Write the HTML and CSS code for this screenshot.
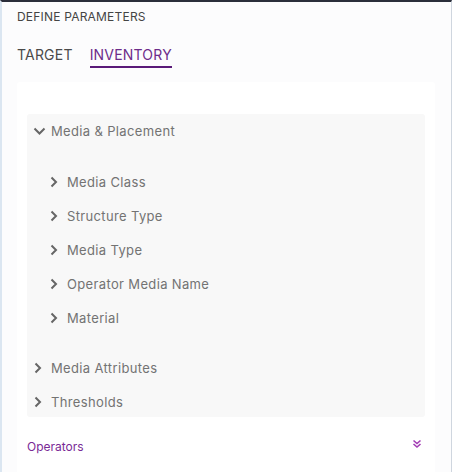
FILE: index.html
```html
<!DOCTYPE html>
<html>
<head>
<meta charset="utf-8">
<link rel="stylesheet" href="styles.css">
</head>
<body>
<div class="panel">
  <div class="title">DEFINE PARAMETERS</div>
  <div class="tabs">
    <div class="tab">TARGET</div>
    <div class="tab active">INVENTORY</div>
  </div>
  <div class="card">
    <div class="tree">
      <div class="row top">
        <svg class="chev" width="13" height="10" viewBox="0 0 13 10"><path d="M1.5 2.5 L6.5 7.5 L11.5 2.5" fill="none" stroke="#666" stroke-width="2"/></svg>
        <span>Media &amp; Placement</span>
      </div>
      <div class="children">
        <div class="row sub"><svg class="chev" width="8" height="12" viewBox="0 0 8 12"><path d="M1.5 1.5 L6 6 L1.5 10.5" fill="none" stroke="#666" stroke-width="2"/></svg><span>Media Class</span></div>
        <div class="row sub"><svg class="chev" width="8" height="12" viewBox="0 0 8 12"><path d="M1.5 1.5 L6 6 L1.5 10.5" fill="none" stroke="#666" stroke-width="2"/></svg><span>Structure Type</span></div>
        <div class="row sub"><svg class="chev" width="8" height="12" viewBox="0 0 8 12"><path d="M1.5 1.5 L6 6 L1.5 10.5" fill="none" stroke="#666" stroke-width="2"/></svg><span>Media Type</span></div>
        <div class="row sub"><svg class="chev" width="8" height="12" viewBox="0 0 8 12"><path d="M1.5 1.5 L6 6 L1.5 10.5" fill="none" stroke="#666" stroke-width="2"/></svg><span>Operator Media Name</span></div>
        <div class="row sub"><svg class="chev" width="8" height="12" viewBox="0 0 8 12"><path d="M1.5 1.5 L6 6 L1.5 10.5" fill="none" stroke="#666" stroke-width="2"/></svg><span>Material</span></div>
      </div>
      <div class="row top2"><svg class="chev" width="8" height="12" viewBox="0 0 8 12"><path d="M1.5 1.5 L6 6 L1.5 10.5" fill="none" stroke="#666" stroke-width="2"/></svg><span>Media Attributes</span></div>
      <div class="row top2"><svg class="chev" width="8" height="12" viewBox="0 0 8 12"><path d="M1.5 1.5 L6 6 L1.5 10.5" fill="none" stroke="#666" stroke-width="2"/></svg><span>Thresholds</span></div>
    </div>
    <div class="operators">
      <span>Operators</span>
      <svg width="10" height="10" viewBox="0 0 10 10"><path d="M1.5 1.5 L5 4.5 L8.5 1.5 M1.5 5 L5 8 L8.5 5" fill="none" stroke="#a23cb4" stroke-width="1.6"/></svg>
    </div>
  </div>
</div>
</body>
</html>
```
FILE: styles.css
```css
html, body {
  margin: 0;
  padding: 0;
}
body {
  width: 452px;
  height: 472px;
  overflow: hidden;
  font-family: Inter, "Open Sans", sans-serif;
  background: #fcfcfd;
}
.panel {
  box-sizing: border-box;
  height: 472px;
  border-top: 2px solid #2b2e3a;
  border-left: 2px solid #dbe6f1;
  border-right: 1px solid #cfd6df;
  padding: 0 16px 0 15px;
}
.title {
  font-size: 12px;
  color: #444;
  letter-spacing: 0.2px;
  padding-top: 8px;
  line-height: 14px;
  height: 14px;
}
.tabs {
  display: flex;
  gap: 17px;
  margin-top: 22px;
  height: 36px;
}
.tab {
  font-size: 14px;
  line-height: 18px;
  color: #4a4a4a;
  letter-spacing: 0.2px;
  height: 22px;
  box-sizing: border-box;
}
.tab.active {
  color: #6d2c8a;
  border-bottom: 2px solid #5a1a78;
}
.card {
  background: #ffffff;
  height: 390px;
  padding: 32px 10px 0 10px;
  box-sizing: border-box;
  border-radius: 3px 3px 0 0;
}
.tree {
  background: #f8f8f8;
  border-radius: 3px;
  height: 303px;
  box-sizing: border-box;
}
.row {
  display: flex;
  align-items: center;
  font-size: 13px;
  color: #737373;
  letter-spacing: 0.35px;
  height: 34px;
}
.row span { line-height: 16px; }
.top { padding-left: 6px; }
.top .chev { margin-right: 5px; }
.children { padding-top: 17px; padding-bottom: 16px; }
.sub { padding-left: 23px; }
.sub .chev { margin-right: 9px; }
.top2 .chev { margin-right: 9px; }
.top2 { padding-left: 7px; }
.operators {
  display: flex;
  justify-content: space-between;
  align-items: center;
  padding: 22px 3px 0 0;
  font-size: 12px;
  color: #7a2a96;
}
.operators svg { margin-top: -6px; }
```
